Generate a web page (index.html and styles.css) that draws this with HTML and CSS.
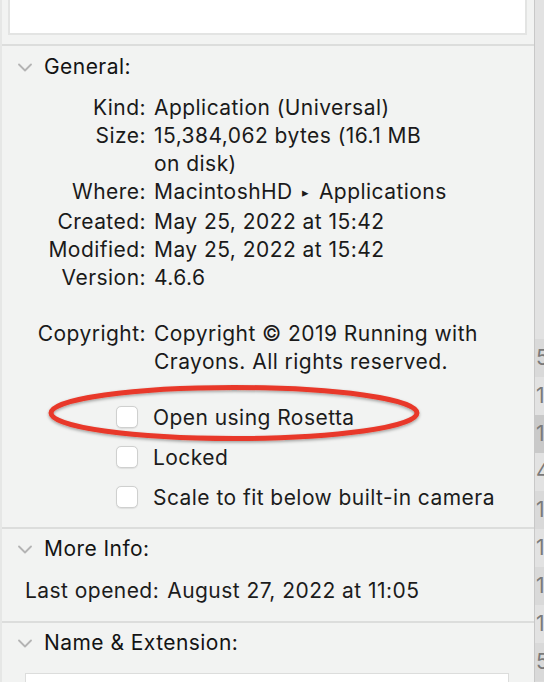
FILE: index.html
```
<!DOCTYPE html>
<html>
<head>
<meta charset="utf-8">
<link rel="stylesheet" href="styles.css">
</head>
<body>
<div class="window">
  <div class="panel">
    <div class="top-box"></div>
    <div class="sep sep-top"></div>

    <section class="section general">
      <div class="header"><span class="chev"><svg width="14" height="9" viewBox="0 0 14 9"><path d="M1 1.5 L7 7.5 L13 1.5" fill="none" stroke="#b4b4b4" stroke-width="1.8" stroke-linecap="round" stroke-linejoin="round"/></svg></span>General:</div>
      <div class="grid">
        <div class="lbl">Kind:</div><div class="val">Application (Universal)</div>
        <div class="lbl">Size:</div><div class="val">15,384,062 bytes (16.1 MB<br>on disk)</div>
        <div class="lbl">Where:</div><div class="val">MacintoshHD <span class="tri">▸</span> Applications</div>
        <div class="lbl">Created:</div><div class="val">May 25, 2022 at 15:42</div>
        <div class="lbl">Modified:</div><div class="val">May 25, 2022 at 15:42</div>
        <div class="lbl">Version:</div><div class="val">4.6.6</div>
        <div class="lbl">&nbsp;</div><div class="val">&nbsp;</div>
        <div class="lbl">Copyright:</div><div class="val">Copyright © 2019 Running with<br>Crayons. All rights reserved.</div>
      </div>
      <div class="checks">
        <div class="check"><span class="box"></span>Open using Rosetta</div>
        <div class="check"><span class="box"></span>Locked</div>
        <div class="check"><span class="box"></span>Scale to fit below built-in camera</div>
      </div>
      <svg class="ring" width="400" height="72" viewBox="0 0 400 72">
        <defs>
          <filter id="sh" x="-10%" y="-40%" width="120%" height="180%">
            <feDropShadow dx="0" dy="1.5" stdDeviation="1.5" flood-color="#000" flood-opacity="0.35"/>
          </filter>
        </defs>
        <ellipse cx="191" cy="34" rx="183" ry="25.5" fill="none" stroke="#e8392a" stroke-width="5" filter="url(#sh)"/>
      </svg>
    </section>

    <div class="sep"></div>

    <section class="section more">
      <div class="header"><span class="chev"><svg width="14" height="9" viewBox="0 0 14 9"><path d="M1 1.5 L7 7.5 L13 1.5" fill="none" stroke="#b4b4b4" stroke-width="1.8" stroke-linecap="round" stroke-linejoin="round"/></svg></span>More Info:</div>
      <div class="last"><span class="last-lbl">Last opened:</span><span>August 27, 2022 at 11:05</span></div>
    </section>

    <div class="sep"></div>

    <section class="section name">
      <div class="header"><span class="chev"><svg width="14" height="9" viewBox="0 0 14 9"><path d="M1 1.5 L7 7.5 L13 1.5" fill="none" stroke="#b4b4b4" stroke-width="1.8" stroke-linecap="round" stroke-linejoin="round"/></svg></span>Name &amp; Extension:</div>
      <div class="field">Alfred 4.app</div>
    </section>
  </div>

  <div class="strip">
    <div class="srow r-a"></div>
    <div class="srow r-b">5</div>
    <div class="srow r-a">15</div>
    <div class="srow r-sel">1</div>
    <div class="srow r-a">4</div>
    <div class="srow r-b">17</div>
    <div class="srow r-a">1</div>
    <div class="srow r-b">15</div>
    <div class="srow r-a">15</div>
    <div class="srow r-b">5</div>
  </div>
</div>
</body>
</html>
```
FILE: styles.css
```
* { box-sizing: border-box; }
html, body { margin: 0; padding: 0; }
body {
  width: 544px;
  height: 682px;
  overflow: hidden;
  font-family: Inter, "Noto Sans", "Liberation Sans", sans-serif;
  font-size: 21px;
  letter-spacing: 0.45px;
  color: #1c1c1c;
  background: #f2f3f2;
}
.window {
  display: flex;
  height: 682px;
}
.panel {
  width: 534px;
  flex: none;
  background: #f2f3f2;
  border-left: 2px solid #e6e7e6;
  position: relative;
}
.top-box {
  margin: 0 7px 0 6px;
  height: 35px;
  background: #fff;
  border: 2px solid #e3e4e3;
  border-top: none;
}
.sep {
  height: 2px;
  background: #dcdddc;
}
.sep-top { margin-top: 9px; }

.section { position: relative; }
.header {
  display: flex;
  align-items: center;
  height: 28px;
  line-height: 28px;
  color: #141414;
}
.chev {
  width: 42px;
  padding-left: 16px;
  display: flex;
  align-items: center;
}
.general { padding-top: 7px; padding-bottom: 10px; }
.general .grid {
  margin-top: 13px;
  display: grid;
  grid-template-columns: 144px 1fr;
  column-gap: 8px;
  line-height: 28px;
}
.lbl { text-align: right; color: #1a1a1a; }
.val { color: #1a1a1a; }
.tri { font-size: 13px; position: relative; top: -2px; padding: 0 3px; }

.checks {
  margin-top: 21px;
  padding-left: 114px;
  display: flex;
  flex-direction: column;
}
.check {
  display: flex;
  align-items: center;
  height: 40px;
}
.box {
  width: 22px;
  height: 22px;
  background: #fff;
  border: 1px solid #cfd0cf;
  border-radius: 5px;
  margin-right: 15px;
  box-shadow: 0 0.5px 1px rgba(0,0,0,0.08);
}
.ring {
  position: absolute;
  left: 41px;
  top: 333px;
  pointer-events: none;
}

.more { padding-top: 6px; padding-bottom: 16px; }
.last {
  margin-top: 14px;
  padding-left: 23px;
  line-height: 28px;
  display: flex;
  gap: 8px;
}
.name { padding-top: 6px; }
.field {
  margin: 16px 25px 0 23px;
  height: 40px;
  background: #fff;
  border: 1px solid #dcdddc;
  padding: 4px 8px;
  line-height: 28px;
}

.strip {
  flex: 1;
  background: #dcdcdc;
  border-left: 1px solid #c8c8c8;
  overflow: hidden;
  color: #7a7a7a;
  font-size: 21px;
  letter-spacing: 0;
  white-space: nowrap;
}
.srow {
  height: 38px;
  line-height: 38px;
  padding-left: 1px;
}
.srow:first-child { height: 339px; }
.r-a { background: #e2e2e2; }
.r-b { background: #d9d9d9; }
.r-sel { background: #c9c9c9; }
```
